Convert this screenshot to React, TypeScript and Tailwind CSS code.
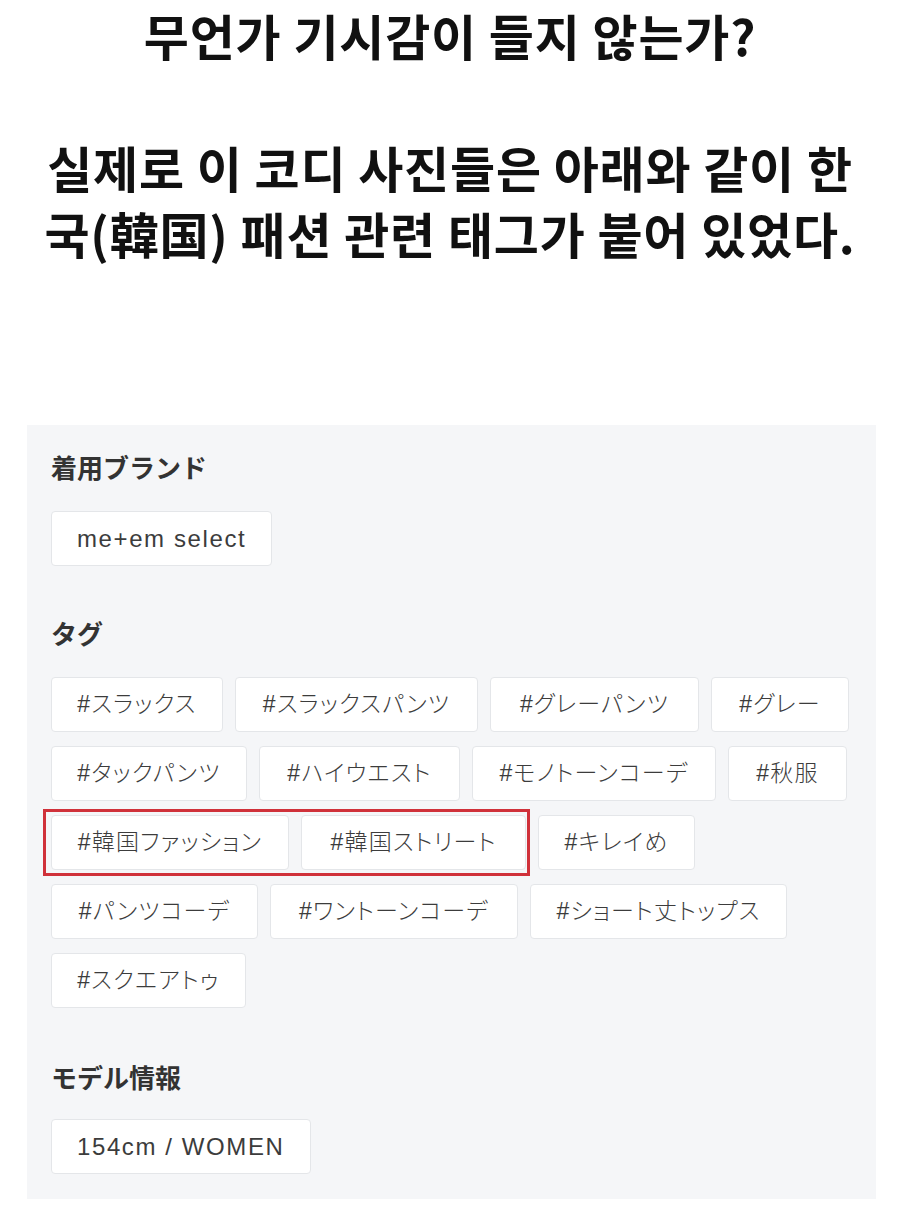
const tags = [
  { label: "#スラックス", w: "w-[172px]" },
  { label: "#スラックスパンツ", w: "w-[243px]" },
  { label: "#グレーパンツ", w: "w-[209px]" },
  { label: "#グレー", w: "w-[138px]" },
  { label: "#タックパンツ", w: "w-[196px]" },
  { label: "#ハイウエスト", w: "w-[201px]" },
  { label: "#モノトーンコーデ", w: "w-[244px]" },
  { label: "#秋服", w: "w-[119px]" },
  { label: "#韓国ファッション", w: "w-[238px]" },
  { label: "#韓国ストリート", w: "w-[225px]" },
  { label: "#キレイめ", w: "w-[157px]" },
  { label: "#パンツコーデ", w: "w-[207px]" },
  { label: "#ワントーンコーデ", w: "w-[248px]" },
  { label: "#ショート丈トップス", w: "w-[257px]" },
  { label: "#スクエアトゥ", w: "w-[195px]" },
];

function Chip({ label, w = "" }: { label: string; w?: string }) {
  return (
    <span
      className={`flex h-[55px] items-center justify-center whitespace-nowrap rounded-[4px] border border-[#e4e6e9] bg-white font-light text-[#3c3c3c] [font-feature-settings:'palt'] ${
        w ? `${w} text-[23px] tracking-[1.2px]` : "px-[25px] text-[24px] tracking-[1.6px]"
      }`}
    >
      {label}
    </span>
  );
}

function Heading({ children }: { children: React.ReactNode }) {
  return <h3 className="text-[26px] font-bold leading-[36px] text-[#333]">{children}</h3>;
}

export default function App() {
  return (
    <div className="min-h-[1213px] bg-white font-['Liberation_Sans','Noto_Sans_CJK_JP',sans-serif]">
      <div className="pt-[2px] text-center font-['Noto_Sans_CJK_KR',sans-serif] text-[49px] font-bold leading-[66px] tracking-[0.8px] text-[#111]">
        <h1>무언가 기시감이 들지 않는가?</h1>
        <p className="mt-[66px]">
          실제로 이 코디 사진들은 아래와 같이 한
          <br />
          국(韓国) 패션 관련 태그가 붙어 있었다.
        </p>
      </div>

      <section className="mt-[159px] ml-[27px] mr-[24px] bg-[#f5f6f8] px-[24px] pt-[26px] pb-[25px]">
        <Heading>着用ブランド</Heading>
        <div className="mt-[24px] flex">
          <Chip label="me+em select" />
        </div>

        <div className="mt-[51px]">
          <Heading>タグ</Heading>
        </div>
        <div className="relative mt-[24px] flex flex-wrap gap-x-[12px] gap-y-[14px]">
          {tags.map((t) => (
            <Chip key={t.label} label={t.label} w={t.w} />
          ))}
          <div className="pointer-events-none absolute left-[-8px] top-[132px] h-[67px] w-[487px] border-[3px] border-[#d0313a]" />
        </div>

        <div className="mt-[53px]">
          <Heading>モデル情報</Heading>
        </div>
        <div className="mt-[22px] flex">
          <Chip label="154cm / WOMEN" />
        </div>
      </section>
    </div>
  );
}
